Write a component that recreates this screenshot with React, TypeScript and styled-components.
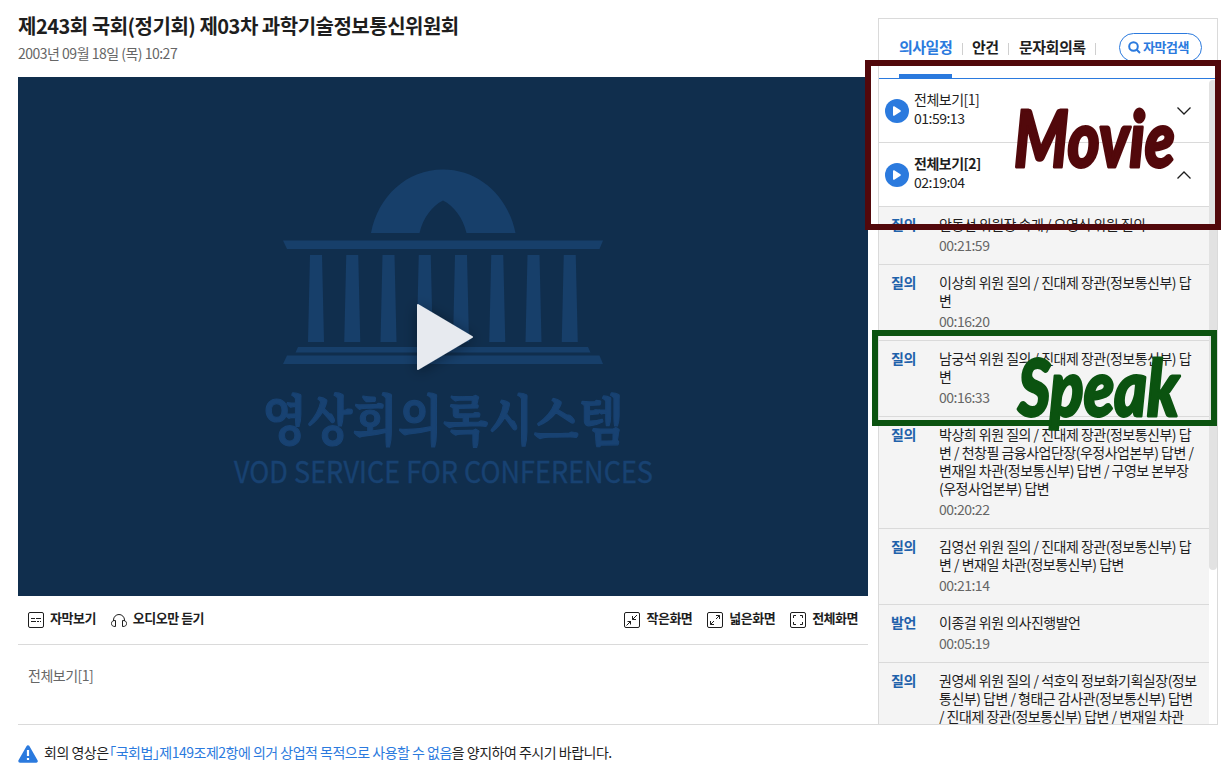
import React from "react";
import styled, { createGlobalStyle } from "styled-components";

const GlobalStyle = createGlobalStyle`
  * { box-sizing: border-box; }
  body {
    margin: 0;
    background: #fff;
    color: #1e1e1e;
    font-family: "Noto Sans CJK KR", "Noto Sans", sans-serif;
    font-size: 14px;
    letter-spacing: -0.5px;
    overflow: hidden;
  }
`;

const Page = styled.div`
  position: relative;
  width: 1222px;
  height: 767px;
  padding: 18px 4px 0 18px;
`;

const Main = styled.main`
  display: flex;
  gap: 10px;
  height: 707px;
  border-bottom: 1px solid #dadada;
`;

const Viewer = styled.section`
  width: 850px;
  display: flex;
  flex-direction: column;
`;

const Heading = styled.header`
  height: 59px;
`;

const Title = styled.h1`
  margin: 0;
  font-size: 20px;
  line-height: 16px;
  font-weight: 700;
`;

const DateLine = styled.p`
  margin: 9px 0 0;
  line-height: 20px;
  color: #666;
`;

const Video = styled.div`
  height: 519px;
  background: #102e4d;

  svg { display: block; }
`;

const Controls = styled.div`
  display: flex;
  justify-content: space-between;
  height: 49px;
  padding: 0 10px;
  border-bottom: 1px solid #dadada;
`;

const ControlGroup = styled.div`
  display: flex;
  align-items: center;
  gap: 15px;
`;

const Control = styled.button`
  display: flex;
  align-items: center;
  gap: 6px;
  padding: 0;
  border: 0;
  background: none;
  color: inherit;
  font: 700 13px/20px "Noto Sans CJK KR", sans-serif;
  letter-spacing: -0.5px;

  span { margin-top: -4px; }
`;

const NowPlaying = styled.p`
  margin: 0;
  padding: 20px 10px;
  line-height: 20px;
  color: #666;
`;

const Panel = styled.aside`
  display: flex;
  flex-direction: column;
  width: 340px;
  height: 706px;
  border: 1px solid #dadada;
  border-bottom: 0;
`;

const Tabs = styled.nav`
  display: flex;
  height: 60px;
  padding: 0 15px 0 20px;
  border-bottom: 1px solid #2b7ade;
`;

const Tab = styled.div<{ $active?: boolean; $width: number }>`
  width: ${(p) => p.$width}px;
  height: 59px;
  padding-top: 18px;
  border-bottom: 4px solid ${(p) => (p.$active ? "#2b7ade" : "transparent")};
  color: ${(p) => (p.$active ? "#2b7ade" : "#1e1e1e")};
  font-size: 15px;
  line-height: 20px;
  font-weight: 700;
  white-space: nowrap;
`;

const Divider = styled.i<{ $after: number }>`
  width: 1px;
  height: 12px;
  margin: 24px ${(p) => p.$after}px 0 10px;
  background: #cfcfcf;
`;

const SearchButton = styled.button`
  display: flex;
  align-items: center;
  gap: 2px;
  width: 83px;
  height: 29px;
  margin: 14px 0 0 auto;
  padding: 0 0 0 8px;
  border: 1px solid #2b7ade;
  border-radius: 15px;
  background: #fff;
  color: #2b7ade;
  font: 700 13px/18px "Noto Sans CJK KR", sans-serif;
  letter-spacing: -0.5px;
  white-space: nowrap;

  span { margin-top: -2px; }
`;

const Scroller = styled.div`
  display: flex;
  flex: 1;
  min-height: 0;
  overflow: hidden;
`;

const List = styled.div`
  width: 330px;
  height: 100%;
  overflow: hidden;
`;

const Thumb = styled.div`
  width: 8px;
  height: 490px;
  margin-top: 1px;
  border-radius: 4px;
  background: #e2e2e2;
`;

const MovieRow = styled.div<{ $bold?: boolean }>`
  display: flex;
  align-items: center;
  height: 64px;
  padding: 0 17px 0 6px;
  border-bottom: 1px solid #dadada;
  line-height: 19px;

  strong { display: block; font-weight: ${(p) => (p.$bold ? 700 : 400)}; }
`;

const MovieText = styled.div`
  flex: 1;
  margin: -3px 0 0 5px;
`;

const Item = styled.div`
  display: flex;
  padding: 8px 0 10px 12px;
  border-bottom: 1px solid #dadada;
  background: #f4f4f4;
  line-height: 18px;
`;

const Kind = styled.b`
  width: 48px;
  flex: none;
  color: #1f61aa;
`;

const Speech = styled.div`
  white-space: nowrap;
`;

const Time = styled.div`
  margin-top: 3px;
  color: #666;
`;

const Notice = styled.footer`
  display: flex;
  align-items: center;
  gap: 6px;
  height: 56px;
  white-space: nowrap;

  em {
    margin-left: -2px;
    font-style: normal;
    color: #2b7ade;
    font-feature-settings: "halt";
  }
  svg { margin-top: 2px; }
  div { margin-top: -2px; }
`;

const Frame = styled.div<{ $x: number; $y: number; $w: number; $h: number; $color: string }>`
  position: absolute;
  left: ${(p) => p.$x}px;
  top: ${(p) => p.$y}px;
  width: ${(p) => p.$w}px;
  height: ${(p) => p.$h}px;
  border: 6px solid ${(p) => p.$color};
`;

const Lettering = styled.svg<{ $x: number; $y: number }>`
  position: absolute;
  left: ${(p) => p.$x}px;
  top: ${(p) => p.$y}px;
  overflow: visible;
  font-family: Lato, sans-serif;
  font-weight: 900;
  font-style: italic;
  letter-spacing: 0;
  stroke-width: 2.8px;
  stroke-linejoin: round;
`;

const items: { kind: string; lines: string[]; time: string }[] = [
  { kind: "질의", lines: ["안동선 위원장 속개 / 오영식 위원 질의"], time: "00:21:59" },
  { kind: "질의", lines: ["이상희 위원 질의 / 진대제 장관(정보통신부) 답", "변"], time: "00:16:20" },
  { kind: "질의", lines: ["남궁석 위원 질의 / 진대제 장관(정보통신부) 답", "변"], time: "00:16:33" },
  {
    kind: "질의",
    lines: [
      "박상희 위원 질의 / 진대제 장관(정보통신부) 답",
      "변 / 천창필 금융사업단장(우정사업본부) 답변 /",
      "변재일 차관(정보통신부) 답변 / 구영보 본부장",
      "(우정사업본부) 답변",
    ],
    time: "00:20:22",
  },
  { kind: "질의", lines: ["김영선 위원 질의 / 진대제 장관(정보통신부) 답", "변 / 변재일 차관(정보통신부) 답변"], time: "00:21:14" },
  { kind: "발언", lines: ["이종걸 위원 의사진행발언"], time: "00:05:19" },
  {
    kind: "질의",
    lines: [
      "권영세 위원 질의 / 석호익 정보화기획실장(정보",
      "통신부) 답변 / 형태근 감사관(정보통신부) 답변",
      "/ 진대제 장관(정보통신부) 답변 / 변재일 차관",
    ],
    time: "",
  },
];

const Poster = () => (
  <svg width="850" height="519" viewBox="18 77 850 519">
    <defs>
      <filter id="shadow" x="-50%" y="-50%" width="200%" height="200%">
        <feDropShadow dx="0" dy="2" stdDeviation="7" floodColor="#000" floodOpacity="0.4" />
      </filter>
    </defs>
    <g fill="#173f6a">
      <path d="M371 233C378 196 407 169.500 443 169.500S508 196 515.500 233H466.500C463 218 454 206 443 200.500C432 206 423 218 419.500 233Z" />
      <path d="M283 240.500H603L599.500 249H287Z" />
      {Array.from({ length: 8 }, (_, i) => (
        <path key={i} transform={`translate(${i * 36.25} 0)`} d="M310 255H322L324 342H308Z" />
      ))}
      <path d="M298 347H588L590.500 352.500H295.500Z" />
      <path d="M287 355.500H599.500L603 364H283Z" />
    </g>
    <g fill="#184272" style={{ letterSpacing: 0 }}>
      <text x="262" y="440" fontSize="55" fontWeight="700" stroke="#184272" strokeWidth="1.200" fontFamily='"Noto Serif CJK KR", "Noto Sans CJK KR", serif' textLength="362" lengthAdjust="spacingAndGlyphs">
        영상회의록시스템
      </text>
      <text x="234" y="483" fontSize="30" stroke="#184272" strokeWidth="0.400" fontFamily='"Noto Sans CJK KR", sans-serif' textLength="419" lengthAdjust="spacingAndGlyphs">
        VOD SERVICE FOR CONFERENCES
      </text>
    </g>
    <path d="M418 305L472 337L418 369Z" fill="#e7eaef" stroke="#e7eaef" strokeWidth="2" strokeLinejoin="round" filter="url(#shadow)" />
  </svg>
);

const BoxIcon = ({ d }: { d: string }) => (
  <svg width="16" height="16" fill="none" stroke="#1e1e1e">
    <rect x="0.500" y="0.500" width="15" height="15" rx="1.500" />
    <path d={d} />
  </svg>
);

const HeadphoneIcon = () => (
  <svg width="16" height="16" viewBox="0 0 16 16" fill="none" stroke="#1e1e1e">
    <path d="M2.500 9V8A5.500 5.500 0 0 1 13.500 8V9M4.500 8.500V14.500C1.500 14.500 .500 13.500 .500 11.500S1.500 8.500 4.500 8.500ZM11.500 8.500V14.500C14.500 14.500 15.500 13.500 15.500 11.500S14.500 8.500 11.500 8.500Z" />
  </svg>
);

const PlayIcon = () => (
  <svg width="24" height="24">
    <circle cx="12" cy="12" r="12" fill="#2b7ade" />
    <path d="M8.800 8L15 12L8.800 16Z" fill="#fff" stroke="#fff" strokeWidth="1.600" strokeLinejoin="round" />
  </svg>
);

const Chevron = ({ up }: { up?: boolean }) => (
  <svg width="16" height="10" fill="none" stroke="#1e1e1e" strokeWidth="1.300">
    <path d={up ? "M1.500 8.500L8 2L14.500 8.500" : "M1.500 1.500L8 8L14.500 1.500"} />
  </svg>
);

export default function App() {
  return (
    <Page>
      <GlobalStyle />
      <Main>
        <Viewer>
          <Heading>
            <Title>제243회 국회(정기회) 제03차 과학기술정보통신위원회</Title>
            <DateLine>2003년 09월 18일 (목) 10:27</DateLine>
          </Heading>
          <Video>
            <Poster />
          </Video>
          <Controls>
            <ControlGroup>
              <Control>
                <BoxIcon d="M3 6.500H7M8 6.500H13M3 9.500H8M9 9.500H11M12 9.500H13" />
                <span>자막보기</span>
              </Control>
              <Control>
                <HeadphoneIcon />
                <span>오디오만 듣기</span>
              </Control>
            </ControlGroup>
            <ControlGroup>
              <Control>
                <BoxIcon d="M13 3L8.500 7.500M8.500 4V7.500H12M2.500 13.500L7 9M3.500 9.500H6.500V12.500" />
                <span>작은화면</span>
              </Control>
              <Control>
                <BoxIcon d="M9 7L12.500 3.500M9 3.500H12.500V7M7 9L3.500 12.500M3.500 9V12.500H7" />
                <span>넓은화면</span>
              </Control>
              <Control>
                <BoxIcon d="M3.500 6V3.500H6M10 3.500H12.500V6M12.500 10V12.500H10M6 12.500H3.500V10" />
                <span>전체화면</span>
              </Control>
            </ControlGroup>
          </Controls>
          <NowPlaying>전체보기[1]</NowPlaying>
        </Viewer>

        <Panel>
          <Tabs>
            <Tab $active $width={53}>의사일정</Tab>
            <Divider $after={9} />
            <Tab $width={26}>안건</Tab>
            <Divider $after={10} />
            <Tab $width={66}>문자회의록</Tab>
            <Divider $after={0} />
            <SearchButton>
              <svg width="13" height="13" fill="none" stroke="#2b7ade" strokeWidth="2">
                <circle cx="5.500" cy="5.500" r="4.300" />
                <path d="M8.500 8.500L12 12" />
              </svg>
              <span>자막검색</span>
            </SearchButton>
          </Tabs>
          <Scroller>
            <List>
              <MovieRow>
                <PlayIcon />
                <MovieText>
                  <strong>전체보기[1]</strong>01:59:13
                </MovieText>
                <Chevron />
              </MovieRow>
              <MovieRow $bold>
                <PlayIcon />
                <MovieText>
                  <strong>전체보기[2]</strong>02:19:04
                </MovieText>
                <Chevron up />
              </MovieRow>
              {items.map((item, i) => (
                <Item key={i}>
                  <Kind>{item.kind}</Kind>
                  <Speech>
                    {item.lines.map((line) => (
                      <div key={line}>{line}</div>
                    ))}
                    <Time>{item.time}</Time>
                  </Speech>
                </Item>
              ))}
            </List>
            <Thumb />
          </Scroller>
        </Panel>
      </Main>

      <Notice>
        <svg width="20" height="18" viewBox="0 0 20 18">
          <path d="M10 2L18 16H2Z" fill="#2b7ade" stroke="#2b7ade" strokeWidth="3.500" strokeLinejoin="round" />
          <path d="M10 5V11M10 13V15" stroke="#fff" strokeWidth="2.200" />
        </svg>
        <div>
          회의 영상은 <em>「국회법」제149조제2항에 의거 상업적 목적으로 사용할 수 없음</em>을 양지하여 주시기 바랍니다.
        </div>
      </Notice>

      <Frame $x={865} $y={60} $w={356} $h={170} $color="#52080b" />
      <Lettering $x={1014} $y={100} width="164" height="72" fill="#52080b" stroke="#52080b">
        <text x="0" y="67" fontSize="79" textLength="161" lengthAdjust="spacingAndGlyphs">Movie</text>
      </Lettering>
      <Frame $x={872} $y={330} $w={345} $h={96} $color="#0b5310" />
      <Lettering $x={1017} $y={350} width="164" height="84" fill="#0b5310" stroke="#0b5310">
        <text x="1" y="66" fontSize="79" textLength="161" lengthAdjust="spacingAndGlyphs">Speak</text>
      </Lettering>
    </Page>
  );
}
